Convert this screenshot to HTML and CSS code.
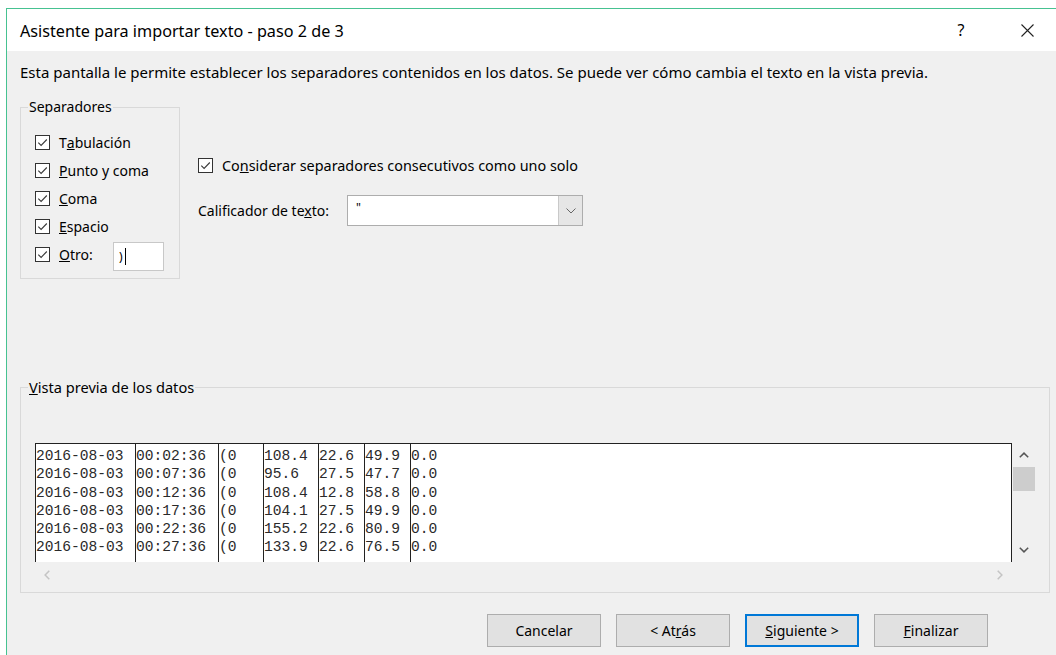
FILE: index.html
```html
<!DOCTYPE html>
<html lang="es">
<head>
<meta charset="utf-8">
<title>Asistente para importar texto - paso 2 de 3</title>
<link rel="stylesheet" href="styles.css">
</head>
<body>
<div class="window">
  <header class="titlebar">
    <span class="title">Asistente para importar texto - paso 2 de 3</span>
    <span class="help">?</span>
    <span class="close">
      <svg width="13" height="13" viewBox="0 0 13 13"><path d="M0.5 0.5 L12.5 12.5 M12.5 0.5 L0.5 12.5" stroke="#222" stroke-width="1.1" fill="none"/></svg>
    </span>
  </header>

  <main class="content">
    <p class="intro">Esta pantalla le permite establecer los separadores contenidos en los datos. Se puede ver cómo cambia el texto en la vista previa.</p>

    <div class="options">
      <fieldset class="group seps">
        <legend>Separadores</legend>
        <label class="check"><span class="box"><svg viewBox="0 0 13 13"><path d="M2.3 6.6 L5.1 9.4 L10.8 3.5" /></svg></span>T<u>a</u>bulación</label>
        <label class="check"><span class="box"><svg viewBox="0 0 13 13"><path d="M2.3 6.6 L5.1 9.4 L10.8 3.5" /></svg></span><u>P</u>unto y coma</label>
        <label class="check"><span class="box"><svg viewBox="0 0 13 13"><path d="M2.3 6.6 L5.1 9.4 L10.8 3.5" /></svg></span><u>C</u>oma</label>
        <label class="check"><span class="box"><svg viewBox="0 0 13 13"><path d="M2.3 6.6 L5.1 9.4 L10.8 3.5" /></svg></span><u>E</u>spacio</label>
        <label class="check other"><span class="box"><svg viewBox="0 0 13 13"><path d="M2.3 6.6 L5.1 9.4 L10.8 3.5" /></svg></span><span class="other-label"><u>O</u>tro:</span><span class="other-input">)<span class="caret"></span></span></label>
      </fieldset>

      <div class="side-opts">
        <label class="check"><span class="box"><svg viewBox="0 0 13 13"><path d="M2.3 6.6 L5.1 9.4 L10.8 3.5" /></svg></span>Co<u>n</u>siderar separadores consecutivos como uno solo</label>
        <div class="qualifier">
          <span class="qualifier-label">Calificador de te<u>x</u>to:</span>
          <div class="combo">
            <span class="combo-value">"</span>
            <span class="combo-btn"><svg width="10" height="6" viewBox="0 0 10 6"><path d="M0.5 0.5 L5 5 L9.5 0.5" /></svg></span>
          </div>
        </div>
      </div>
    </div>

    <fieldset class="group preview">
      <legend><u>V</u>ista previa de los datos</legend>
      <div class="preview-body">
        <div class="data">
          <div class="col c1">2016-08-03<br>2016-08-03<br>2016-08-03<br>2016-08-03<br>2016-08-03<br>2016-08-03</div>
          <div class="col c2">00:02:36<br>00:07:36<br>00:12:36<br>00:17:36<br>00:22:36<br>00:27:36</div>
          <div class="col c3">(0<br>(0<br>(0<br>(0<br>(0<br>(0</div>
          <div class="col c4">108.4<br>95.6<br>108.4<br>104.1<br>155.2<br>133.9</div>
          <div class="col c5">22.6<br>27.5<br>12.8<br>27.5<br>22.6<br>22.6</div>
          <div class="col c6">49.9<br>47.7<br>58.8<br>49.9<br>80.9<br>76.5</div>
          <div class="col c7">0.0<br>0.0<br>0.0<br>0.0<br>0.0<br>0.0</div>
        </div>
        <div class="vscroll">
          <svg class="arrow" width="10" height="6" viewBox="0 0 10 6"><path d="M0.8 5.3 L5 1.1 L9.2 5.3" /></svg>
          <div class="thumb"></div>
          <svg class="arrow down" width="10" height="6" viewBox="0 0 10 6"><path d="M0.8 0.7 L5 4.9 L9.2 0.7" /></svg>
        </div>
      </div>
      <div class="hscroll">
        <svg width="6" height="10" viewBox="0 0 6 10"><path d="M5.3 0.8 L1.1 5 L5.3 9.2" /></svg>
        <svg width="6" height="10" viewBox="0 0 6 10"><path d="M0.7 0.8 L4.9 5 L0.7 9.2" /></svg>
      </div>
    </fieldset>

    <footer class="buttons">
      <button class="btn">Cancelar</button>
      <button class="btn">&lt; At<u>r</u>ás</button>
      <button class="btn primary"><u>S</u>iguiente &gt;</button>
      <button class="btn"><u>F</u>inalizar</button>
    </footer>
  </main>
</div>
</body>
</html>
```

FILE: styles.css
```css
* { box-sizing: border-box; }

html, body {
  margin: 0;
  padding: 0;
  background: #ffffff;
}

body {
  width: 1056px;
  height: 655px;
  overflow: hidden;
  font-family: "Noto Sans", "Open Sans", sans-serif;
  font-size: 14px;
  color: #000;
}

.window {
  margin: 8px 0 0 6px;
  height: 647px;
  border-top: 1px solid #46c291;
  border-left: 1px solid #46c291;
  display: flex;
  flex-direction: column;
}

/* title bar */
.titlebar {
  height: 42px;
  background: #fff;
  display: flex;
  align-items: center;
  padding-left: 13px;
}

.title {
  font-size: 16.2px;
  flex: 1;
  padding-top: 1px;
}

.help {
  font-size: 16px;
  width: 20px;
  text-align: center;
  margin-right: 50px;
}

.close {
  display: flex;
  width: 13px;
  margin-right: 22px;
}

/* dialog body */
.content {
  flex: 1;
  background: #f0f0f0;
  padding: 0 6px 0 13px;
  display: flex;
  flex-direction: column;
}

.intro {
  margin: 12px 0 0;
  line-height: 18px;
  font-size: 15px;
  white-space: nowrap;
}

.group {
  margin: 0;
  padding: 0;
  border: 1px solid #d9d9d9;
  min-width: 0;
}

.group legend {
  margin-left: -7px;
  padding: 0 1px;
  line-height: 16px;
  font-size: 14px;
}

.preview legend {
  font-size: 14.6px;
}

.options {
  display: flex;
  margin-top: 18px;
}

.seps {
  width: 160px;
  padding: 13px 0 10px 14px;
}

.check {
  display: flex;
  align-items: center;
  height: 28px;
  white-space: nowrap;
}

.box {
  width: 15px;
  height: 15px;
  border: 1px solid #333;
  background: #fff;
  margin-right: 9px;
  flex: none;
  display: flex;
}

.box svg {
  width: 13px;
  height: 13px;
}

.box path {
  fill: none;
  stroke: #3a3a3a;
  stroke-width: 1.1;
}

.other-label {
  width: 54px;
}

.other-input {
  width: 51px;
  height: 29px;
  background: #fff;
  border: 1px solid #c8c8c8;
  display: flex;
  align-items: center;
  padding-left: 5px;
  margin-top: 5px;
  font-size: 12px;
}

.caret {
  width: 1px;
  height: 17px;
  background: #000;
  margin-left: 2px;
}

.side-opts {
  margin-left: 18px;
  padding-top: 52px;
  display: flex;
  flex-direction: column;
}

.side-opts .check {
  font-size: 14.4px;
}

.qualifier {
  display: flex;
  align-items: center;
  margin-top: 16px;
}

.qualifier-label {
  width: 149px;
  flex: none;
}

.combo {
  width: 236px;
  height: 31px;
  background: #fff;
  border: 1px solid #adadad;
  display: flex;
}

.combo-value {
  flex: 1;
  padding-left: 8px;
  line-height: 24px;
  font-size: 12px;
}

.combo-btn {
  width: 24px;
  background: #e6e6e6;
  border-left: 1px solid #c9c9c9;
  display: flex;
  align-items: center;
  justify-content: center;
}

.combo-btn path {
  fill: none;
  stroke: #666;
  stroke-width: 1;
}

/* data preview */
.preview {
  margin-top: 100px;
  padding: 48px 0 5px 14px;
}

.preview-body {
  display: flex;
  height: 119px;
}

.data {
  width: 977px;
  border-top: 1px solid #222;
  border-right: 1px solid #222;
  background: #fff;
  display: flex;
  font-family: "Liberation Mono", "Courier New", monospace;
  font-size: 14.6px;
  line-height: 18.3px;
  color: #2a2a2a;
}

.col {
  border-left: 1px solid #222;
  padding-top: 3px;
  flex: none;
  white-space: nowrap;
}

.c1 { width: 100px; }
.c2 { width: 83px; }
.c3 { width: 45px; }
.c4 { width: 55px; }
.c5 { width: 46px; }
.c6 { width: 46px; }
.c7 { flex: 1; }

.vscroll {
  width: 24px;
  display: flex;
  flex-direction: column;
  align-items: center;
}

.vscroll path,
.hscroll path {
  fill: none;
  stroke-width: 1.5;
}

.vscroll path { stroke: #555; }

.vscroll .arrow {
  margin-top: 9px;
}

.vscroll .thumb {
  width: 22px;
  height: 24px;
  background: #cdcdcd;
  margin-top: 9px;
}

.vscroll .down {
  margin-top: auto;
  margin-bottom: 9px;
}

.hscroll {
  width: 977px;
  height: 25px;
  display: flex;
  align-items: center;
  justify-content: space-between;
  padding: 0 9px;
}

.hscroll path { stroke: #c4c4c4; }

/* footer buttons */
.buttons {
  display: flex;
  justify-content: flex-end;
  gap: 15px;
  margin-top: 21px;
  padding-right: 62px;
}

.btn {
  width: 114px;
  height: 33px;
  background: #e1e1e1;
  border: 1px solid #adadad;
  font-family: inherit;
  font-size: 14px;
  color: #000;
  padding: 0;
}

.btn.primary {
  border: 2px solid #0078d7;
}
```
